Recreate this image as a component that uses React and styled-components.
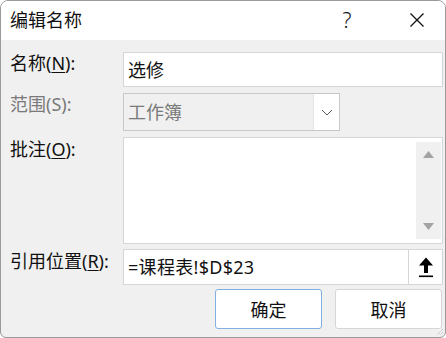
import React from "react";
import styled, { createGlobalStyle } from "styled-components";

const Global = createGlobalStyle`
  html, body { margin: 0; padding: 0; background: #ffffff; }
  body { font-family: "Noto Sans", "Noto Sans CJK SC", sans-serif; }
  * { box-sizing: border-box; }
`;

const Window = styled.div`
  width: 446px;
  height: 338px;
  border: 1px solid #9a9a9a;
  border-radius: 8px 8px 6px 6px;
  overflow: hidden;
  display: flex;
  flex-direction: column;
  background: #f0f0f0;
  position: relative;
`;

const TitleBar = styled.div`
  height: 39px;
  background: #ffffff;
  display: flex;
  align-items: center;
  padding-left: 9px;
  flex-shrink: 0;
`;

const Title = styled.div`
  flex: 1;
  font-size: 18px;
  color: #111;
  line-height: 1;
  margin-top: -2px;
`;

const TitleButton = styled.div`
  width: ${(p) => p.$w}px;
  height: 39px;
  display: flex;
  align-items: center;
  justify-content: center;
  color: #111;
  font-family: "Noto Sans", sans-serif;
  font-weight: 300;
  font-size: 21px;
  padding-bottom: 2px;
`;

const Body = styled.div`
  flex: 1;
  display: grid;
  grid-template-columns: 113px 320px;
  grid-template-rows: 35px 38px 106px 35px 39px;
  row-gap: 6px;
  padding: 12px 0 0 9px;
  align-items: start;
`;

const Label = styled.div`
  font-size: 18px;
  color: ${(p) => (p.$disabled ? "#7a7a7a" : "#111")};
  line-height: 1;
  padding-top: ${(p) => p.$top ?? 2}px;
  white-space: nowrap;
`;

const U = styled.span`
  text-decoration: underline;
  text-decoration-thickness: 1px;
  text-underline-offset: 2px;
`;

const Field = styled.div`
  height: ${(p) => p.$h}px;
  width: ${(p) => p.$w ?? 320}px;
  background: ${(p) => (p.$disabled ? "#f0f0f0" : "#ffffff")};
  border: 1px solid ${(p) => (p.$disabled ? "#c8c8c8" : "#d6d6d6")};
  display: flex;
  align-items: stretch;
  position: relative;
`;

const FieldText = styled.div`
  flex: 1;
  display: flex;
  align-items: center;
  padding-left: 4px;
  font-size: 18px;
  letter-spacing: ${(p) => p.$ls ?? 0}px;
  color: ${(p) => (p.$disabled ? "#7a7a7a" : "#111")};
  line-height: 1;
  white-space: nowrap;
`;

const SideButton = styled.div`
  width: ${(p) => p.$w}px;
  background: #ffffff;
  border-left: 1px solid ${(p) => p.$border || "#d6d6d6"};
  display: flex;
  align-items: center;
  justify-content: center;
`;

const ScrollTrack = styled.div`
  position: absolute;
  right: 1px;
  top: 4px;
  bottom: 4px;
  width: 25px;
  background: #f0f0f0;
  display: flex;
  flex-direction: column;
  justify-content: space-between;
  align-items: center;
  padding: 9px 0 9px;
`;

const Buttons = styled.div`
  grid-column: 1 / span 2;
  display: flex;
  justify-content: flex-end;
  gap: 13px;
  padding-right: 1px;
  margin-top: -1px;
`;

const Btn = styled.div`
  width: ${(p) => p.$w}px;
  height: 40px;
  background: #ffffff;
  border: 1px solid ${(p) => (p.$primary ? "#7fb0e0" : "#d6d6d6")};
  border-radius: 3px;
  display: flex;
  align-items: center;
  justify-content: center;
  font-size: 18px;
  color: #111;
`;

const Grip = styled.svg`
  position: absolute;
  right: 1px;
  bottom: 1px;
`;

const Tri = ({ up }) => (
  <svg width="11" height="7" viewBox="0 0 11 7">
    <polygon points={up ? "5.5,0 11,7 0,7" : "0,0 11,0 5.5,7"} fill="#a3a3a3" />
  </svg>
);

export default function App() {
  return (
    <>
      <Global />
      <Window>
        <TitleBar>
          <Title>编辑名称</Title>
          <TitleButton $w={82}>?</TitleButton>
          <TitleButton $w={57}>
            <svg width="16" height="16" viewBox="0 0 16 16">
              <path d="M1.5 1.5 L14.5 14.5 M14.5 1.5 L1.5 14.5" stroke="#111" strokeWidth="1.3" />
            </svg>
          </TitleButton>
        </TitleBar>
        <Body>
          <Label>
            名称(<U>N</U>):
          </Label>
          <Field $h={35}>
            <FieldText>选修</FieldText>
          </Field>

          <Label $disabled>范围(S):</Label>
          <Field $h={38} $w={217} $disabled>
            <FieldText $disabled>工作簿</FieldText>
            <SideButton $w={26} $border="#e6e6e6">
              <svg width="12" height="7" viewBox="0 0 12 7">
                <path d="M1 1 L6 6 L11 1" stroke="#555" strokeWidth="1" fill="none" />
              </svg>
            </SideButton>
          </Field>

          <Label $top={3}>
            批注(<U>O</U>):
          </Label>
          <Field $h={107}>
            <ScrollTrack>
              <Tri up />
              <Tri />
            </ScrollTrack>
          </Field>

          <Label $top={3}>
            引用位置(<U>R</U>):
          </Label>
          <Field $h={36}>
            <FieldText $ls={0.3}>=课程表!$D$23</FieldText>
            <SideButton $w={34}>
              <svg width="18" height="22" viewBox="0 0 18 22">
                <path d="M9 1.5 L16 9.5 L11 9.5 L11 17 L7 17 L7 9.5 L2 9.5 Z" fill="#000" />
                <rect x="2" y="19.5" width="14" height="1.6" fill="#000" />
              </svg>
            </SideButton>
          </Field>

          <Buttons>
            <Btn $w={107} $primary>确定</Btn>
            <Btn $w={107}>取消</Btn>
          </Buttons>
        </Body>
        <Grip width="10" height="10" viewBox="0 0 10 10">
          <path d="M9 3 L3 9 M9 6 L6 9" stroke="#b0b0b0" strokeWidth="1" strokeDasharray="1 1" />
        </Grip>
      </Window>
    </>
  );
}
